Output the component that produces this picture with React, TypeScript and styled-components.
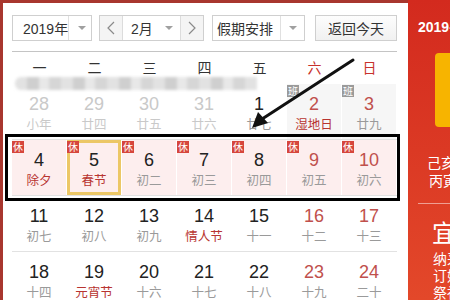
import styled, { createGlobalStyle } from "styled-components";

type Day = {
  d: number;
  l: string;
  prev?: boolean;
  red?: boolean;
  fest?: boolean;
  badge?: "休" | "班";
  selected?: boolean;
};

const weeks: Day[][] = [
  [
    { d: 28, l: "小年", prev: true },
    { d: 29, l: "廿四", prev: true },
    { d: 30, l: "廿五", prev: true },
    { d: 31, l: "廿六", prev: true },
    { d: 1, l: "廿七" },
    { d: 2, l: "湿地日", red: true, fest: true, badge: "班" },
    { d: 3, l: "廿九", red: true, badge: "班" },
  ],
  [
    { d: 4, l: "除夕", fest: true, badge: "休" },
    { d: 5, l: "春节", fest: true, badge: "休", selected: true },
    { d: 6, l: "初二", badge: "休" },
    { d: 7, l: "初三", badge: "休" },
    { d: 8, l: "初四", badge: "休" },
    { d: 9, l: "初五", red: true, badge: "休" },
    { d: 10, l: "初六", red: true, badge: "休" },
  ],
  [
    { d: 11, l: "初七" },
    { d: 12, l: "初八" },
    { d: 13, l: "初九" },
    { d: 14, l: "情人节", fest: true },
    { d: 15, l: "十一" },
    { d: 16, l: "十二", red: true },
    { d: 17, l: "十三", red: true },
  ],
  [
    { d: 18, l: "十四" },
    { d: 19, l: "元宵节", fest: true },
    { d: 20, l: "十六" },
    { d: 21, l: "十七" },
    { d: 22, l: "十八" },
    { d: 23, l: "十九", red: true },
    { d: 24, l: "二十", red: true },
  ],
];

const weekdays = ["一", "二", "三", "四", "五", "六", "日"];

const App = () => {
  return (
    <Page>
      <GlobalStyle />
      <CalendarPanel>
        <Toolbar>
          <SelectBox $w={80}>
            <SelectText $pl={10}>2019年</SelectText>
            <Caret $w={25} />
          </SelectBox>
          <SelectBox $w={105} $ml={7}>
            <NavBtn $side="left">
              <Chevron dir="left" />
            </NavBtn>
            <SelectText $pl={8}>2月</SelectText>
            <Caret $w={22} $plain />
            <NavBtn $side="right">
              <Chevron dir="right" />
            </NavBtn>
          </SelectBox>
          <SelectBox $w={93} $ml={8}>
            <SelectText $pl={4}>假期安排</SelectText>
            <Caret $w={23} />
          </SelectBox>
          <TodayButton>返回今天</TodayButton>
        </Toolbar>
        <Rule />
        <WeekHeader>
          {weekdays.map((w, i) => (
            <WeekName key={w} $red={i > 4}>
              {w}
            </WeekName>
          ))}
        </WeekHeader>
        <Days>
          {weeks.map((row, ri) => (
            <WeekRow key={ri}>
              {row.map((c) => (
                <Cell key={`${ri}-${c.d}`} $badge={c.badge} $selected={c.selected}>
                  {c.badge && <Badge $kind={c.badge}>{c.badge}</Badge>}
                  <DayNum $prev={c.prev} $red={c.red}>
                    {c.d}
                  </DayNum>
                  <Lunar $prev={c.prev} $fest={c.fest}>
                    {c.l}
                  </Lunar>
                </Cell>
              ))}
            </WeekRow>
          ))}
          <BlurStrip />
          <HighlightBox />
        </Days>
      </CalendarPanel>
      <SidePanel>
        <DateTitle>2019-02-05 星期二</DateTitle>
        <BigDay>5</BigDay>
        <SideLines>
          <SideLine $pl={35}>正月初一</SideLine>
          <SideLine $pl={9}>己亥年【猪年】</SideLine>
          <SideLine $pl={11}>丙寅月 丁丑日</SideLine>
        </SideLines>
        <SideRule />
        <YiTitle>宜</YiTitle>
        <YiList>
          <div>纳采 订盟</div>
          <div>订婚 嫁娶</div>
          <div>祭祀 祈福</div>
        </YiList>
      </SidePanel>
      <Arrow width="450" height="300" viewBox="0 0 450 300">
        <line x1="353" y1="60" x2="259" y2="121" stroke="#111" strokeWidth="3" strokeLinecap="round" />
        <polygon points="252,128 258,112 268,123" fill="#111" />
      </Arrow>
    </Page>
  );
};

const Chevron = ({ dir }: { dir: "left" | "right" }) => (
  <svg width="8" height="14" viewBox="0 0 8 14">
    <polyline
      points={dir === "left" ? "7,1 1,7 7,13" : "1,1 7,7 1,13"}
      fill="none"
      stroke="#8a8a8a"
      strokeWidth="1.2"
    />
  </svg>
);

const GlobalStyle = createGlobalStyle`
  html, body {
    margin: 0;
    padding: 0;
    background: #fff;
  }
  body {
    font-family: "Liberation Sans", "Noto Sans CJK SC", sans-serif;
  }
`;

const Page = styled.div`
  position: relative;
  width: 450px;
  height: 300px;
  display: flex;
  overflow: hidden;
`;

const CalendarPanel = styled.div`
  width: 408px;
  flex: none;
  box-sizing: border-box;
  border-left: 3px solid #a8362e;
  border-top: 3px solid #a8362e;
  padding: 12px 11px 0 9px;
  background: #fff;
`;

const Toolbar = styled.div`
  display: flex;
  height: 26px;
`;

const SelectBox = styled.div<{ $w: number; $ml?: number }>`
  display: flex;
  width: ${(p) => p.$w}px;
  margin-left: ${(p) => p.$ml ?? 0}px;
  box-sizing: border-box;
  border: 1px solid #cfcfcf;
  background: #fff;
`;

const SelectText = styled.div<{ $pl: number }>`
  flex: 1;
  display: flex;
  align-items: center;
  padding-left: ${(p) => p.$pl}px;
  font-size: 14px;
  color: #333;
  white-space: nowrap;
`;

const Caret = styled.div<{ $w: number; $plain?: boolean }>`
  width: ${(p) => p.$w}px;
  flex: none;
  display: flex;
  align-items: center;
  justify-content: center;
  border-left: ${(p) => (p.$plain ? "none" : "1px solid #e0e0e0")};

  &::after {
    content: "";
    border-left: 4px solid transparent;
    border-right: 4px solid transparent;
    border-top: 4px solid #a0a0a0;
  }
`;

const NavBtn = styled.div<{ $side: "left" | "right" }>`
  width: 22px;
  flex: none;
  display: flex;
  align-items: center;
  justify-content: center;
  background: #f4f4f4;
  ${(p) => (p.$side === "left" ? "border-right" : "border-left")}: 1px solid #dcdcdc;
`;

const TodayButton = styled.div`
  width: 82px;
  margin-left: 10px;
  box-sizing: border-box;
  border: 1px solid #cfcfcf;
  background: linear-gradient(#fdfdfd, #f1f1f1);
  display: flex;
  align-items: center;
  justify-content: center;
  font-size: 14px;
  color: #333;
`;

const Rule = styled.div`
  height: 1px;
  margin-top: 10px;
  background: #c4c4c4;
`;

const WeekHeader = styled.div`
  display: grid;
  grid-template-columns: repeat(7, 55px);
  height: 32px;
`;

const WeekName = styled.div<{ $red: boolean }>`
  text-align: center;
  line-height: 32px;
  font-size: 14px;
  color: ${(p) => (p.$red ? "#c8322c" : "#333")};
`;

const Days = styled.div`
  position: relative;
`;

const WeekRow = styled.div`
  display: grid;
  grid-template-columns: repeat(7, 55px);
  height: 56px;
  box-sizing: border-box;
  border-bottom: 1px solid #e2e2e2;
`;

const Cell = styled.div<{ $badge?: "休" | "班"; $selected?: boolean }>`
  position: relative;
  margin-right: 1px;
  padding-top: 9px;
  text-align: center;
  background: ${(p) => (p.$badge === "休" ? "#fdeeee" : p.$badge === "班" ? "#f6f6f6" : "transparent")};
  box-shadow: ${(p) => (p.$selected ? "inset 0 0 0 3px #ecc766" : "none")};
`;

const Badge = styled.span<{ $kind: "休" | "班" }>`
  position: absolute;
  left: 0;
  top: 1px;
  width: 12px;
  height: 12px;
  line-height: 12px;
  font-size: 10px;
  text-align: center;
  color: #fff;
  background: ${(p) => (p.$kind === "休" ? "#d6463c" : "#9a9a9a")};
  font-family: "Noto Sans CJK SC", sans-serif;
`;

const DayNum = styled.div<{ $prev?: boolean; $red?: boolean }>`
  font-size: 18px;
  line-height: 22px;
  color: ${(p) => (p.$prev ? "#c9c9c9" : p.$red ? "#c0504c" : "#222")};
`;

const Lunar = styled.div<{ $prev?: boolean; $fest?: boolean }>`
  font-size: 12.5px;
  line-height: 17px;
  font-family: "Noto Sans CJK SC", sans-serif;
  color: ${(p) => (p.$prev ? "#c9c9c9" : p.$fest ? "#b83430" : "#9a9a9a")};
`;

const BlurStrip = styled.div`
  position: absolute;
  left: 3px;
  top: -7px;
  width: 242px;
  height: 13px;
  border-radius: 6px 0 0 6px;
  filter: blur(1.5px);
  background: repeating-linear-gradient(
    90deg,
    #e2e2e2 0 12px,
    #cfcfcf 12px 24px,
    #e8e8e8 24px 34px,
    #d6d6d6 34px 46px
  );
`;

const HighlightBox = styled.div`
  position: absolute;
  left: -7px;
  top: 50px;
  width: 395px;
  height: 67px;
  box-sizing: border-box;
  border: 3px solid #000;
  pointer-events: none;
`;

const SidePanel = styled.div`
  flex: 1;
  overflow: hidden;
  padding-left: 10px;
  background: linear-gradient(#d32a1e, #e3482a);
  color: #fff;
  white-space: nowrap;
  font-family: "Liberation Sans", "Noto Sans CJK SC", sans-serif;
`;

const DateTitle = styled.div`
  margin-top: 19px;
  font-size: 14px;
  line-height: 16px;
  font-weight: bold;
`;

const BigDay = styled.div`
  margin: 18px 0 0 17px;
  width: 80px;
  height: 74px;
  border-radius: 4px;
  background: #f7b400;
  color: #fff;
  font-size: 48px;
  line-height: 74px;
  text-align: right;
  padding-right: 20px;
  box-sizing: border-box;
  font-weight: bold;
`;

const SideLines = styled.div`
  margin-top: 9px;
`;

const SideLine = styled.div<{ $pl: number }>`
  padding-left: ${(p) => p.$pl}px;
  font-size: 14px;
  line-height: 18px;
`;

const SideRule = styled.div`
  margin-top: 13px;
  height: 1px;
  width: 120px;
  background: rgba(255, 255, 255, 0.5);
`;

const YiTitle = styled.div`
  margin-top: 14px;
  padding-left: 14px;
  font-size: 24px;
  line-height: 28px;
  font-family: "Noto Sans CJK SC", sans-serif;
`;

const YiList = styled.div`
  margin-top: 4px;
  padding-left: 15px;
  font-size: 14px;
  line-height: 17px;
  font-family: "Noto Sans CJK SC", sans-serif;
`;

const Arrow = styled.svg`
  position: absolute;
  left: 0;
  top: 0;
  pointer-events: none;
`;

export default App;
